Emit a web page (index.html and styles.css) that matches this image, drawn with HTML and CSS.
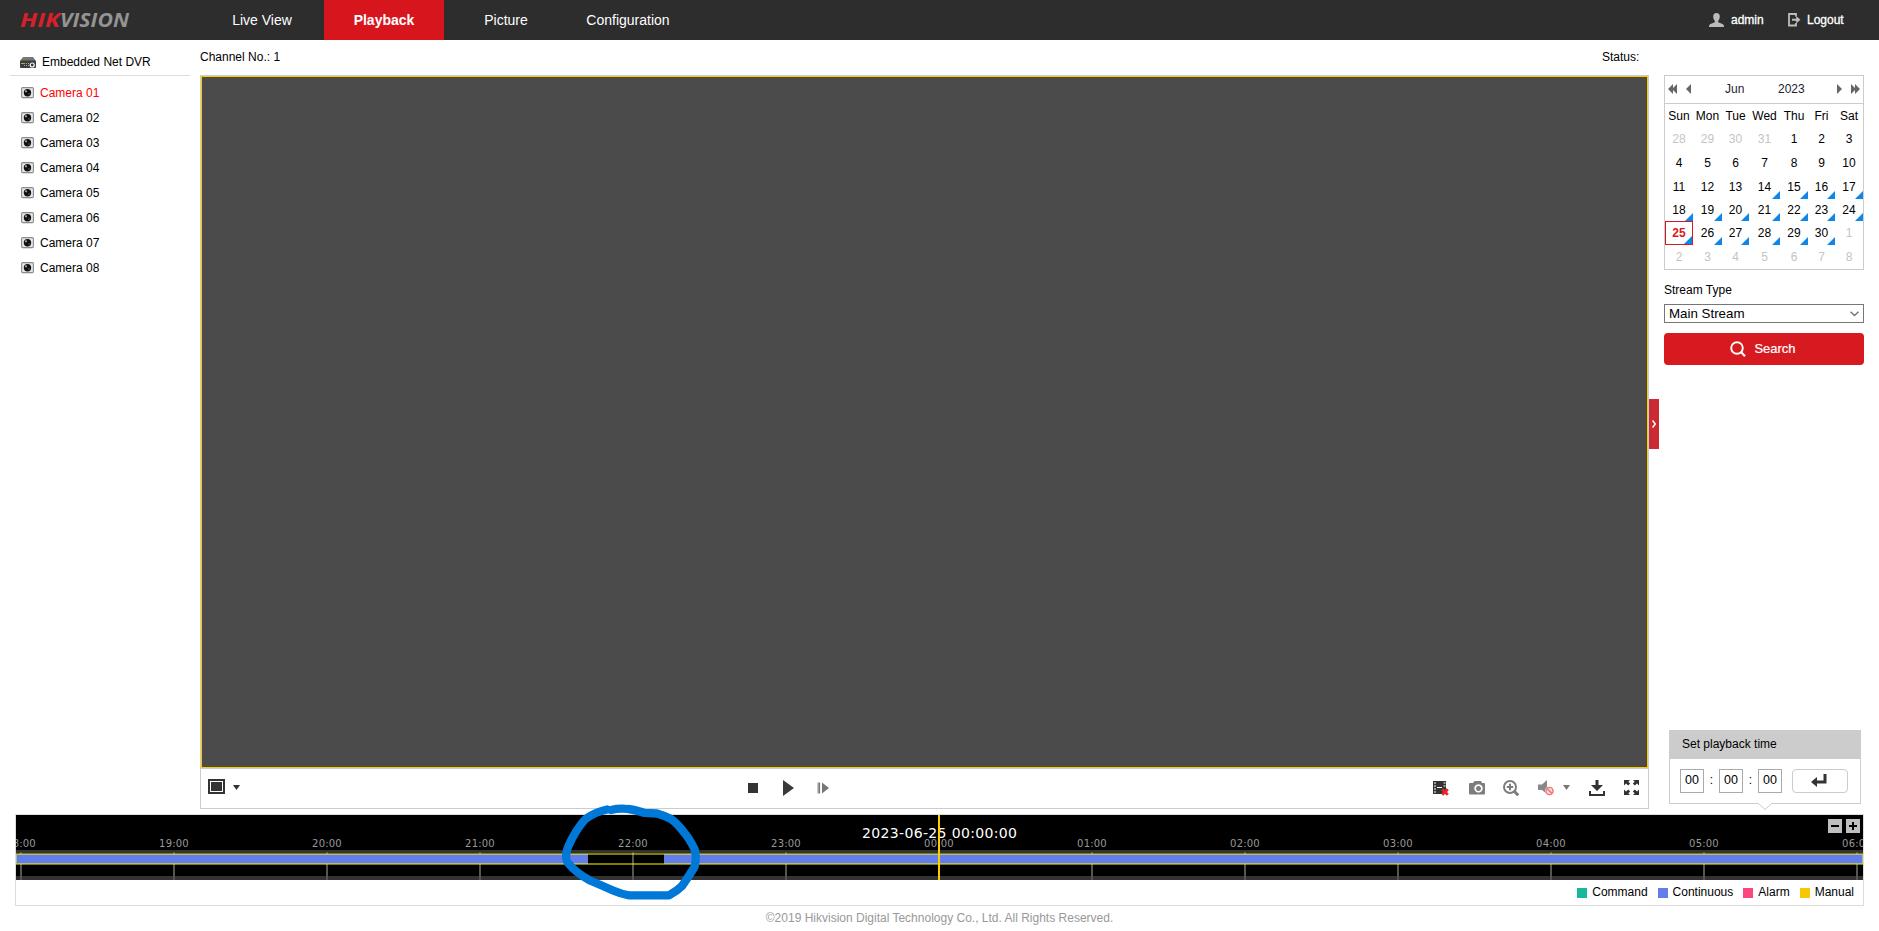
FILE: index.html
```html
<!DOCTYPE html>
<html lang="en">
<head>
<meta charset="utf-8">
<title>Playback</title>
<link rel="stylesheet" href="styles.css">
</head>
<body>
<svg class="defs" width="0" height="0" aria-hidden="true">
  <symbol id="cam" viewBox="0 0 13 12">
    <rect x=".6" y=".6" width="11.8" height="10" rx="1" fill="#e6e6e6" stroke="#8c8c8c" stroke-width="1.1"/>
    <circle cx="6.5" cy="5.7" r="3.700" fill="#111"/>
    <circle cx="5" cy="4.3" r="1.1" fill="#7db4bd"/>
    <circle cx="8" cy="7" r=".9" fill="#7a3038"/>
    <path d="M2 11.5h9" stroke="#ddd"/>
  </symbol>
</svg>
<header class="top">
  <svg class="logo" width="114" height="30" viewBox="0 0 114 30">
    <text class="logo-a" x="1" y="22" textLength="40" lengthAdjust="spacingAndGlyphs">HIK</text>
    <text class="logo-b" x="41" y="22" textLength="69" lengthAdjust="spacingAndGlyphs">VISION</text>
  </svg>
  <nav class="nav">
    <a class="tab">Live View</a><a class="tab tab-on">Playback</a><a class="tab">Picture</a><a class="tab tab-last">Configuration</a>
  </nav>
  <div class="user">
    <svg width="15" height="14" viewBox="0 0 15 14" fill="#bcbcbc"><path d="M4.2 3.6C4.2 1.400 5.400 0 7.500 0s3.300 1.400 3.300 3.600c0 1.900-.7 3.400-1.600 4.200v1.400L13.500 11c1 .5 1.500 1.200 1.500 3H0c0-1.800.5-2.500 1.500-3l4.300-1.800V7.800C4.900 7 4.200 5.500 4.200 3.600z"/></svg>
    <span class="uname">admin</span>
    <svg width="13" height="14" viewBox="0 0 13 14"><path d="M8 3.500V1H1v11.500h7V10" fill="none" stroke="#bcbcbc" stroke-width="1.800"/><path d="M4 5.800h4.200V3l4.300 3.800-4.300 3.700V7.800H4z" fill="#bcbcbc"/></svg>
    <span class="ulogout">Logout</span>
  </div>
</header>
<main class="main">
  <aside class="side">
    <div class="device">
      <svg width="16" height="12" viewBox="0 0 16 12"><path d="M3 0h10l3 4H0z" fill="#777"/><rect y="3.600" width="16" height="7.400" rx="1" fill="#3d3d3d"/><path d="M1 6.500h3" stroke="#7bd12c"/><path d="M4 6.500h6M4 8.500h6" stroke="#aaa" stroke-dasharray="1 1"/><circle cx="12.200" cy="8" r="2" fill="#333" stroke="#fff" stroke-width="1.200"/></svg>
      <span>Embedded Net DVR</span>
    </div>
    <ul class="cams">
      <li class="cam-on"><svg width="13" height="12"><use href="#cam"/></svg>Camera 01</li>
      <li><svg width="13" height="12"><use href="#cam"/></svg>Camera 02</li>
      <li><svg width="13" height="12"><use href="#cam"/></svg>Camera 03</li>
      <li><svg width="13" height="12"><use href="#cam"/></svg>Camera 04</li>
      <li><svg width="13" height="12"><use href="#cam"/></svg>Camera 05</li>
      <li><svg width="13" height="12"><use href="#cam"/></svg>Camera 06</li>
      <li><svg width="13" height="12"><use href="#cam"/></svg>Camera 07</li>
      <li><svg width="13" height="12"><use href="#cam"/></svg>Camera 08</li>
    </ul>
  </aside>
  <section class="center">
    <div class="info"><span>Channel No.: 1</span><span class="status">Status:</span></div>
    <div class="player">
      <div class="video"></div>
      <div class="tools">
        <div class="tools-l">
          <svg width="17" height="15"><rect width="17" height="15" fill="#333"/><rect x="2.500" y="2.500" width="12" height="10" fill="none" stroke="#fff"/></svg>
          <svg width="7" height="5"><path d="M0 0h7L3.500 5z" fill="#333"/></svg>
        </div>
        <div class="tools-c">
          <svg width="10" height="10"><rect width="10" height="10" fill="#333"/></svg>
          <svg width="11" height="16"><path d="M0 0l11 8L0 16z" fill="#3a3a3a"/></svg>
          <svg width="12" height="12"><path d="M.7 .5v11" stroke="#bbb"/><path d="M2.200 .5v11" stroke="#777" stroke-width="1.800"/><path d="M5 0.500l7 5.500-7 5.500z" fill="#777"/></svg>
        </div>
        <div class="tools-r">
          <svg width="16" height="16"><path d="M0 1h13v13H0z" fill="#333"/><path d="M1 3h2M1 6h2M1 9h2M1 12h2M10.500 3h2M10.500 6h2M4 7.500h5" stroke="#fff" stroke-width="1.200"/><path d="M9.200 9.200l5.600 5.600M14.800 9.200l-5.600 5.600" stroke="#e3262b" stroke-width="2.800"/></svg>
          <svg width="16" height="16"><path fill="#7d7d7d" fill-rule="evenodd" d="M1 3h3l1.500-2h6.500L13 3h2q1 0 1 1v9.500q0 1-1 1H1q-1 0-1-1V4q0-1 1-1zM9.500 4.200a4.200 4.200 0 1 0 .01 0zm0 1.800a2.500 2.500 0 1 1-.01 0z"/></svg>
          <svg width="16" height="16" fill="none" stroke="#7d7d7d"><circle cx="7" cy="7" r="6" stroke-width="2"/><path d="M7 3.800v6.400M3.800 7h6.400" stroke-width="2"/><path d="M11 11l4.300 4.300" stroke-width="3"/></svg>
          <svg width="16" height="16"><path d="M0 4.500h4L9 0v14L4 10H0z" fill="#888"/><circle cx="11.500" cy="11" r="4.600" fill="#fff"/><circle cx="11.500" cy="11" r="3.600" fill="#fbdcdc" stroke="#ee7575" stroke-width="1.400"/><path d="M9 8.500l5 5" stroke="#ee7575" stroke-width="1.600"/></svg>
          <svg class="caret" width="7" height="5"><path d="M0 0h7L3.500 5z" fill="#777"/></svg>
          <svg class="down" width="16" height="16" fill="#333"><path d="M6.500 0h3v5H14l-6 6-6-6h4.500z"/><path d="M0 11h2v3h12v-3h2v5H0z"/></svg>
          <svg class="full" width="15" height="15" fill="#333"><path d="M0 0h6L4.300 1.700 6.200 3.600 4.200 5.600 2 3.500 0 5.500zM15 0v5.500l-2-2-2.200 2.100-2-2 1.900-1.900L9 0zM0 15V9.500l2 2 2.200-2.100 2 2-1.900 1.900L6 15zM15 15H9l1.700-1.700-1.900-1.900 2-2 2.200 2.100 2-2z"/></svg>
        </div>
      </div>
      <div class="handle"><svg width="4" height="8"><path d="M.5 .5L3.300 4 .5 7.500" fill="none" stroke="#fff" stroke-width="1.500"/></svg></div>
    </div>
  </section>
  <aside class="right">
    <div class="cal">
      <div class="cal-head">
        <svg class="c1" width="9" height="10" fill="#666"><path d="M5 0v10L0 5zM9 0v10L4 5z"/></svg>
        <svg class="c2" width="5" height="10" fill="#666"><path d="M5 0v10L0 5z"/></svg>
        <span class="month">Jun</span><span class="year">2023</span>
        <svg class="c3" width="5" height="10" fill="#666"><path d="M0 0v10l5-5z"/></svg>
        <svg class="c4" width="9" height="10" fill="#666"><path d="M0 0v10l5-5zM4 0v10l5-5z"/></svg>
      </div>
      <div class="days">
        <b>Sun</b><b>Mon</b><b>Tue</b><b>Wed</b><b>Thu</b><b>Fri</b><b>Sat</b>
        <i class="out">28</i><i class="out">29</i><i class="out">30</i><i class="out">31</i><i>1</i><i>2</i><i>3</i>
        <i>4</i><i>5</i><i>6</i><i>7</i><i>8</i><i>9</i><i>10</i>
        <i>11</i><i>12</i><i>13</i><i class="rec">14</i><i class="rec">15</i><i class="rec">16</i><i class="rec">17</i>
        <i class="rec">18</i><i class="rec">19</i><i class="rec">20</i><i class="rec">21</i><i class="rec">22</i><i class="rec">23</i><i class="rec">24</i>
        <i class="rec today">25</i><i class="rec">26</i><i class="rec">27</i><i class="rec">28</i><i class="rec">29</i><i class="rec">30</i><i class="out">1</i>
        <i class="out">2</i><i class="out">3</i><i class="out">4</i><i class="out">5</i><i class="out">6</i><i class="out">7</i><i class="out">8</i>
      </div>
    </div>
    <label class="stream">Stream Type</label>
    <div class="select"><span>Main Stream</span><svg width="9" height="6"><path d="M.5 .8L4.500 4.500 8.500 .8" fill="none" stroke="#777" stroke-width="1.500"/></svg></div>
    <div class="search"><svg width="16" height="16" fill="none" stroke="#fff"><circle cx="7" cy="7" r="5.800" stroke-width="1.900"/><path d="M11 11l4 4.200" stroke-width="2.200"/></svg><span>Search</span></div>
    <div class="ptime">
      <div class="pt-head">Set playback time</div>
      <div class="pt-body">
        <span class="box">00</span><span class="sep">:</span><span class="box">00</span><span class="sep">:</span><span class="box">00</span>
        <span class="go"><svg width="16" height="14"><path d="M14 0v8H4" fill="none" stroke="#333" stroke-width="3"/><path d="M0 8l6-5v10z" fill="#333"/></svg></span>
      </div>
      <svg class="notch" width="14" height="8"><path d="M0 0h14L7 6.500z" fill="#fff"/><path d="M.5 .5L7 6.500 13.500 .5" fill="none" stroke="#ccc"/></svg>
    </div>
  </aside>
</main>
<section class="timeline">
  <svg class="track" width="1847" height="65" viewBox="16 815 1847 65">
    <rect x="16" y="815" width="1847" height="65" fill="#000"/>
    <path d="M16 851.500h1847" stroke="#333" stroke-width="3"/><path d="M16 878h1847" stroke="#333" stroke-width="4"/>
    <path d="M21 852v28M174 852v28M327 852v28M480 852v28M633 852v28M786 852v28M939 852v28M1092 852v28M1245 852v28M1398 852v28M1551 852v28M1704 852v28M1857 852v28" stroke="#555" stroke-width="2"/>
    <path d="M16 854h572v10H16zM664 854h1199v10H664z" fill="#637dec"/>
    <rect x="16" y="854" width="1847" height="10" fill="none" stroke="#ff0" stroke-opacity=".5" stroke-width="2"/>
    <g class="hours">
      <text x="21" y="847">18:00</text><text x="174" y="847">19:00</text><text x="327" y="847">20:00</text><text x="480" y="847">21:00</text><text x="633" y="847">22:00</text><text x="786" y="847">23:00</text><text x="939" y="847">00:00</text><text x="1092" y="847">01:00</text><text x="1245" y="847">02:00</text><text x="1398" y="847">03:00</text><text x="1551" y="847">04:00</text><text x="1704" y="847">05:00</text><text x="1857" y="847">06:00</text>
    </g>
    <text class="now" x="939.500" y="838" textLength="155">2023-06-25 00:00:00</text>
    <path d="M939 815v65" stroke="#fc0" stroke-width="2"/>
    <path d="M1828 819h14v14h-14zM1846 819h14v14h-14z" fill="#bfbfbf"/>
    <path d="M1831 826h8M1849 826h8M1853 822v8" stroke="#000" stroke-width="2"/>
  </svg>
  <div class="legend">
    <span class="k k1">Command</span><span class="k k2">Continuous</span><span class="k k3">Alarm</span><span class="k k4">Manual</span>
  </div>
  <svg class="mark" width="144" height="100" viewBox="558 803 144 100"><path d="M607 809.500Q595 812 585.500 819Q576 829 568 847Q564 858 568 863Q576 873 590 880.500Q603 886 613 890.500Q621 894 629 895.300H669Q677 891 682 886Q689 876 694.500 867Q697 857 694.500 849Q689 838 684.500 833Q677 823 671 819Q664 815.500 657 813.500L644 812.800Q634 809.500 628 809Q619 808 611 810" fill="none" stroke="#0078d7" stroke-width="8.300" stroke-linejoin="round" stroke-linecap="round"/></svg>
</section>
<footer class="foot">©2019 Hikvision Digital Technology Co., Ltd. All Rights Reserved.</footer>
</body>
</html>
```
FILE: styles.css
```css
* { box-sizing: border-box; }
body { margin: 0; height: 931px; overflow: hidden; background: #fff; color: #000; font: 12px/14px "Liberation Sans", Arial, sans-serif; }
svg { display: block; flex: none; }
.defs { position: absolute; }
.top { height: 40px; background: #2d2d2d; display: flex; align-items: center; color: #fff; }
.logo { margin-left: 19px; font: italic 700 19.5px "Open Sans", sans-serif; }
.logo-a { fill: #d8202a; }
.logo-b { fill: #949494; }
.nav { margin-left: 67px; display: flex; height: 40px; }
.tab { width: 124px; font-size: 14px; line-height: 40px; text-align: center; }
.tab-on { width: 120px; background: #d7151d; font-weight: 700; }
.tab-last { width: 120px; }
.user { margin-left: auto; width: 170px; display: flex; align-items: center; -webkit-text-stroke: .3px #fff; }
.uname { margin-left: 7px; width: 57px; }
.ulogout { margin-left: 6px; }

.main { display: flex; height: 769px; }
.side { width: 190px; padding-left: 10px; }
.device { height: 36px; padding: 8px 0 0 10px; border-bottom: 1px solid #ddd; display: flex; align-items: center; gap: 6px; }
.device svg { margin-top: 3px; }
.cams { list-style: none; margin: 0; padding: 4px 0 0 11px; }
.cams li { height: 25px; display: flex; align-items: center; gap: 6px; }
.cams svg { margin-top: 1px; }
.cam-on { color: #f00; }

.center { margin-left: 10px; width: 1449px; }
.info { height: 35px; padding-top: 10px; display: flex; justify-content: space-between; }
.status { width: 47px; }
.player { position: relative; height: 734px; border: 1px solid #ccc; }
.video { height: 692px; background: #4b4b4b; border: 1px solid #fc0; }
.tools { height: 40px; border-top: 1px solid #ccc; padding-bottom: 2px; display: flex; align-items: center; }
.tools-l { width: 547px; padding-left: 7px; display: flex; align-items: center; gap: 8px; margin-top: -3px; }
.tools-l svg + svg { margin-top: 3px; }
.tools-c { display: flex; align-items: center; width: 685px; }
.tools-c svg:nth-child(2) { margin: 0 23px 0 25px; }
.tools-r { display: flex; align-items: center; }
.tools-r svg { margin-right: 20px; }
.tools-r svg:nth-child(2) { margin-right: 18px; }
.tools-r svg:nth-child(3) { margin-right: 19px; }
.tools-r svg:nth-child(4) { margin-right: 9px; }
.tools-r .caret { margin-right: 19px; }
.tools-r .down { margin-right: 19px; }
.tools-r .full { margin-right: 0; }
.handle { position: absolute; left: 1448px; top: 323px; width: 10px; height: 50px; background: #cb2a31; display: flex; align-items: center; justify-content: center; }

.right { margin-left: 15px; width: 200px; padding-top: 35px; }
.cal { height: 195px; border: 1px solid #ccc; }
.cal-head { height: 28px; padding-bottom: 1px; border-bottom: 1px solid #ccc; display: flex; align-items: center; color: #223; }
.c1 { margin-left: 3px; }
.c2 { margin-left: 9px; }
.month { margin-left: 34px; width: 53px; }
.year { width: 59px; }
.c4 { margin-left: 9px; }
.days { display: grid; grid-template-columns: 28px 29px 27px 31px 28px 27px 28px; grid-template-rows: 24px 22px 25px 24px 22px 24px 24px; }
.days b, .days i { position: relative; font-style: normal; font-weight: 400; display: flex; align-items: center; justify-content: center; }
.days .out { color: #c4c4c4; }
.days .rec::after { content: ""; position: absolute; right: 0; bottom: 0; width: 8px; height: 8px; background: #0d87e9; clip-path: polygon(100% 0, 100% 100%, 0 100%); }
.days .today { border: 1px solid #d71920; color: #d71920; font-weight: 700; }
.stream { display: block; margin-top: 13px; }
.select { margin-top: 7px; height: 19px; border: 1px solid #767676; padding: 0 4px; display: flex; align-items: center; justify-content: space-between; font-size: 13.333px; }
.search { margin-top: 10px; height: 32px; padding-right: 2px; border-radius: 4px; background: #d71920; color: #fff; font-size: 13px; display: flex; align-items: center; justify-content: center; gap: 8px; -webkit-text-stroke: .2px #fff; }
.ptime { position: relative; width: 192px; height: 74px; margin: 365px 0 0 5px; border: 1px solid #ccc; }
.pt-head { height: 28px; background: #ccc; padding: 6px 12px; }
.pt-body { display: flex; padding: 10px 0 0 10px; line-height: 22px; text-align: center; }
.box { width: 24px; height: 24px; border: 1px solid #aaa; font-size: 12.5px; line-height: 21px; }
.sep { width: 15px; }
.go { width: 56px; height: 24px; margin-left: 10px; padding: 0 2px 1px 0; border: 1px solid #ccc; border-radius: 4px; display: flex; align-items: center; justify-content: center; }
.notch { position: absolute; left: 88px; top: 72px; }

.timeline { position: relative; width: 1849px; height: 92px; margin: 5px 0 0 15px; border: 1px solid #ddd; }
.track { font-family: "DejaVu Sans", sans-serif; text-anchor: middle; }
.hours { fill: #999; font-size: 10px; letter-spacing: .2px; }
.now { fill: #fff; font-size: 14px; }
.legend { display: flex; justify-content: flex-end; padding: 5px 9px 0 0; }
.k { display: flex; margin-left: 10px; }
.k::before { content: ""; width: 10px; height: 10px; margin: 3px 5px 0 0; background: #18b89b; }
.k2::before { background: #637dec; }
.k3::before { background: #fb477e; }
.k4::before { background: #f9c606; }
.mark { position: absolute; left: 542px; top: -12px; }
.foot { margin-top: 5px; text-align: center; color: #999; line-height: 14px; }
```
